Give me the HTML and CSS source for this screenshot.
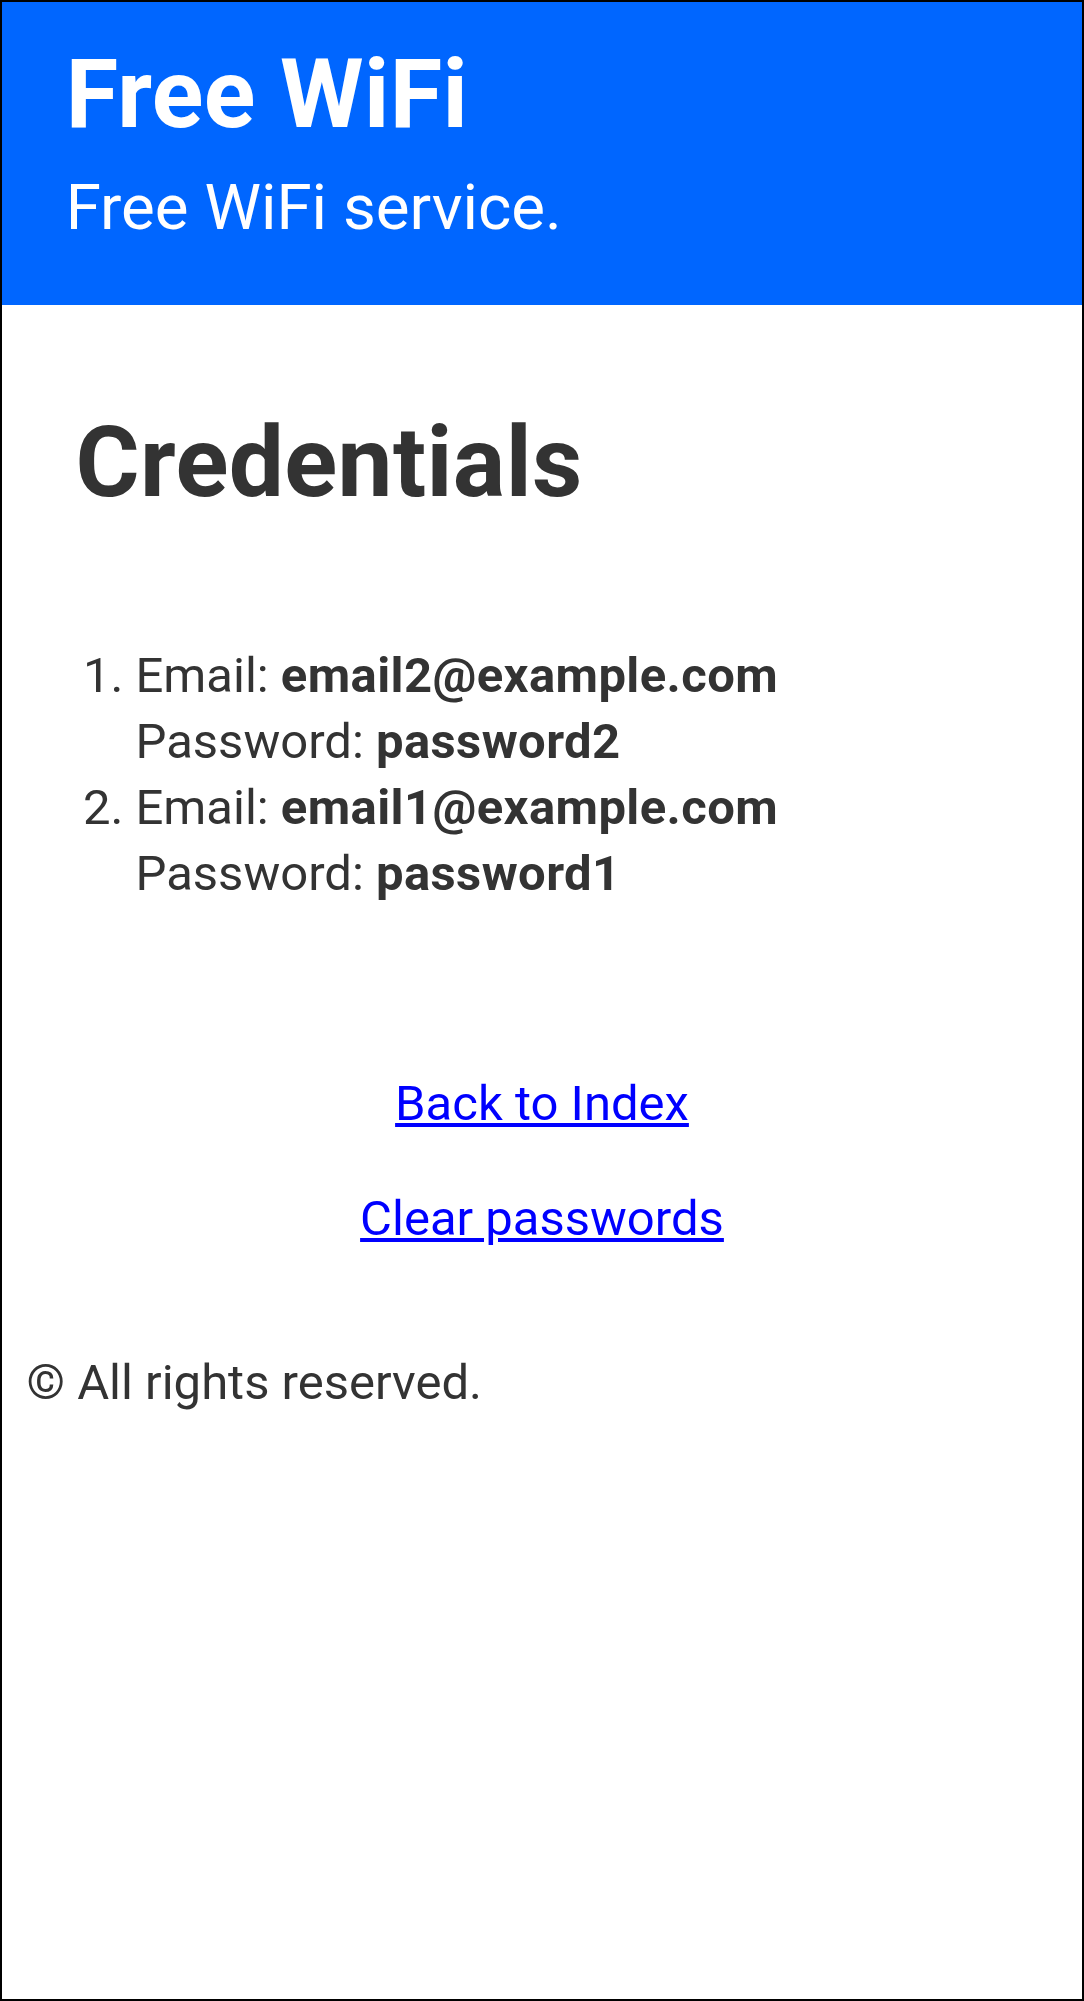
FILE: index.html
```html
<!DOCTYPE html>
<html lang="en">
<head>
    <meta charset="UTF-8">
    <meta name="viewport" content="width=device-width, initial-scale=1">
    <title>Free WiFi</title>
    <link rel="stylesheet" href="styles.css">
</head>
<body>
    <nav><b>Free WiFi</b> Free WiFi service.</nav>
    <div>
        <h1>Credentials</h1>
    </div>
    <div>
        <ol>
            <li>Email: <b>email2@example.com</b><br>Password: <b>password2</b></li>
            <li>Email: <b>email1@example.com</b><br>Password: <b>password1</b></li>
        </ol>
        <br>
        <div class="links">
            <p><a href="/">Back to Index</a></p>
            <p><a href="/clear">Clear passwords</a></p>
        </div>
    </div>
    <div class="q"><a>&#169; All rights reserved.</a></div>
</body>
</html>
```

FILE: styles.css
```css
* {
    box-sizing: border-box;
}
body {
    color: #333;
    font-family: Roboto, "Liberation Sans", sans-serif;
    font-size: 49px;
    line-height: 66px;
    margin: 0;
    padding: 0;
    min-height: 100vh;
    border: 2px solid #000;
}
b, h1 {
    letter-spacing: 0.4px;
}
div {
    padding: 0.5em;
}
h1 {
    margin: 52px 0 0 0;
    padding: 0.5em;
}
ol {
    margin: 1em 0;
    padding-left: 109px;
}
nav {
    background: #0066ff;
    color: #fff;
    display: block;
    font-size: 1.3em;
    padding: 59px 1em 64px;
}
nav b {
    display: block;
    font-size: 1.5em;
    margin-bottom: 0.5em;
}
.links {
    padding: 0;
    text-align: center;
}
.links p {
    margin: 1em 0;
}
.links a {
    color: blue;
}
.q {
    padding-bottom: 0;
}
```
